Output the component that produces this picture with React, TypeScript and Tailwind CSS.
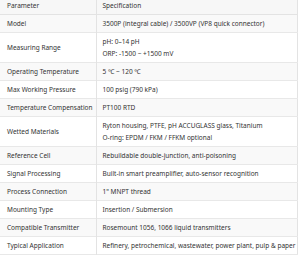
const rows: [string, string[]][] = [
  ["Model", ["3500P (integral cable) / 3500VP (VP8 quick connector)"]],
  ["Measuring Range", ["pH: 0–14 pH", "ORP: -1500 ~ +1500 mV"]],
  ["Operating Temperature", ["5 ℃ ~ 120 ℃"]],
  ["Max Working Pressure", ["100 psig (790 kPa)"]],
  ["Temperature Compensation", ["PT100 RTD"]],
  ["Wetted Materials", ["Ryton housing, PTFE, pH ACCUGLASS glass, Titanium", "O-ring: EPDM / FKM / FFKM optional"]],
  ["Reference Cell", ["Rebuildable double-junction, anti-poisoning"]],
  ["Signal Processing", ["Built-in smart preamplifier, auto-sensor recognition"]],
  ["Process Connection", ["1\" MNPT thread"]],
  ["Mounting Type", ["Insertion / Submersion"]],
  ["Compatible Transmitter", ["Rosemount 1056, 1066 liquid transmitters"]],
  ["Typical Application", ["Refinery, petrochemical, wastewater, power plant, pulp & paper"]],
];

export default function App() {
  return (
    <div className="w-[300px] h-[259px] overflow-hidden bg-white font-['Noto_Sans',sans-serif] text-[6.5px] leading-[12px] text-[#333]">
      <table className="w-[298px] border-collapse border-r border-[#e3e3e3]">
        <thead>
          <tr className="bg-[#f7f7f7] border-b border-[#e3e3e3]">
            <th className="w-[96px] text-left font-normal pl-[7px] pt-0 pb-[2px] border-r border-[#e3e3e3]">Parameter</th>
            <th className="text-left font-normal pl-[6px] pt-0 pb-[2px]">Specification</th>
          </tr>
        </thead>
        <tbody>
          {rows.map(([k, v], i) => (
            <tr key={k} className={`border-b border-[#e8e8e8] ${i % 2 === 0 ? "bg-[#f9f9f9]" : "bg-white"}`}>
              <td className="pl-[7px] pt-[3px] pb-[2px] border-r border-[#e3e3e3] align-middle">{k}</td>
              <td className="pl-[6px] pt-[3px] pb-[2px] align-middle">
                {v.map((line) => (
                  <div key={line}>{line}</div>
                ))}
              </td>
            </tr>
          ))}
        </tbody>
      </table>
    </div>
  );
}
